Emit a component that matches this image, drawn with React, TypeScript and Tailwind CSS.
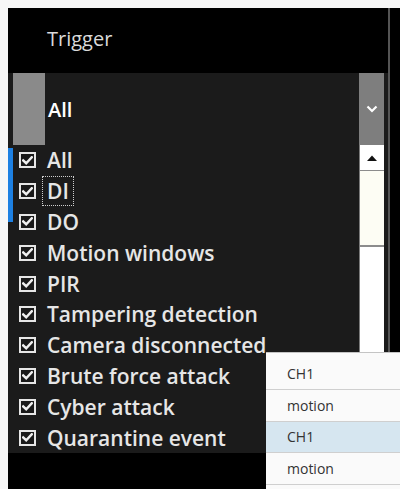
import React from 'react';

const triggers = [
  'All',
  'DI',
  'DO',
  'Motion windows',
  'PIR',
  'Tampering detection',
  'Camera disconnected',
  'Brute force attack',
  'Cyber attack',
  'Quarantine event',
];

const channelRows = [
  { label: 'CH1', active: false, first: true },
  { label: 'motion', active: false },
  { label: 'CH1', active: true },
  { label: 'motion', active: false },
  { label: '', active: false },
];

const CheckBox = () => (
  <span className="flex items-center justify-center w-[17px] h-[16px] border-2 border-[#e6e6e6] bg-[#1a1a1a] shrink-0">
    <svg width="11" height="9" viewBox="0 0 11 9" fill="none">
      <path
        d="M1.2 4.4 L4.2 7.2 L9.8 1.2"
        stroke="#f0f0f0"
        strokeWidth="2.4"
        strokeLinecap="square"
      />
    </svg>
  </span>
);

export default function App() {
  return (
    <div
      className="relative w-[400px] h-[489px] overflow-hidden bg-[#f7f7f7] pt-[8px] pl-[8px] flex"
      style={{ fontFamily: '"Open Sans", "Noto Sans", sans-serif' }}
    >
      {/* trigger panel */}
      <div className="w-[380px] h-full flex flex-col bg-black">
        <div className="h-[65px] flex items-center pl-[39px] pb-[4px] text-[20px] font-medium text-[#dadada]">
          Trigger
        </div>

        {/* select */}
        <div className="h-[72px] flex bg-[#1b1b1b]">
          <div className="w-[5px]" />
          <div className="w-[32px] bg-[#8a8a8a]" />
          <div className="flex-1 flex items-center pl-[3px] pt-[2px] text-[20px] font-semibold text-white">
            All
          </div>
          <div className="w-[25px] bg-[#7e7e7e] flex items-center justify-center">
            <svg width="12" height="8" viewBox="0 0 12 8" fill="none">
              <path d="M1.5 1.5 L6 6 L10.5 1.5" stroke="#ffffff" strokeWidth="2.2" />
            </svg>
          </div>
          <div className="w-[4px] bg-[#1b1b1b]" />
        </div>

        {/* checkbox list */}
        <div className="h-[308px] flex bg-[#1b1b1b]">
          <div className="w-[5px] pt-[3px]">
            <div className="h-[74px] bg-[#1d80e2]" />
          </div>
          <div className="flex-1 flex flex-col">
            {triggers.map((t) => (
              <div
                key={t}
                className="h-[30.8px] shrink-0 flex items-center pl-[6px] gap-[11px] text-[21px] font-semibold text-[#e6e6e6] whitespace-nowrap"
              >
                <CheckBox />
                {t === 'DI' ? (
                  <span className="-ml-[5px] px-[4px] leading-[28px] border border-dotted border-[#cfcfcf]">
                    DI
                  </span>
                ) : (
                  <span className="leading-[28px]">{t}</span>
                )}
              </div>
            ))}
          </div>
          <div className="w-[25px] flex flex-col bg-white border-l border-[#7a7a7a]">
            <div className="h-[25px] flex items-center justify-center bg-white">
              <svg width="10" height="6" viewBox="0 0 10 6">
                <path d="M0 6 L5 0.5 L10 6 Z" fill="#111111" />
              </svg>
            </div>
            <div className="h-[77px] bg-[#fdfdf4] border-t border-b-2 border-[#8c8c8c]" />
          </div>
          <div className="w-[4px]" />
        </div>
      </div>

      {/* right edge */}
      <div className="w-[2px] bg-[#555555]" />
      <div className="flex-1 bg-black" />

      {/* channel dropdown */}
      <div className="absolute left-[266px] top-[352px] w-[134px] bottom-0 flex flex-col overflow-hidden bg-[#fafafa] border-t border-[#c4c4c4] text-[14px] text-[#333333]">
        {channelRows.map((r, i) => (
          <div
            key={i}
            className={
              (r.first ? 'h-[37px] pt-[4px] ' : 'h-[31.5px] ') +
              'shrink-0 flex items-center pl-[21px] border-b border-[#cfcfcf] ' +
              (r.active ? 'bg-[#d6e6f0]' : 'bg-[#fafafa]')
            }
          >
            {r.label}
          </div>
        ))}
      </div>
    </div>
  );
}
